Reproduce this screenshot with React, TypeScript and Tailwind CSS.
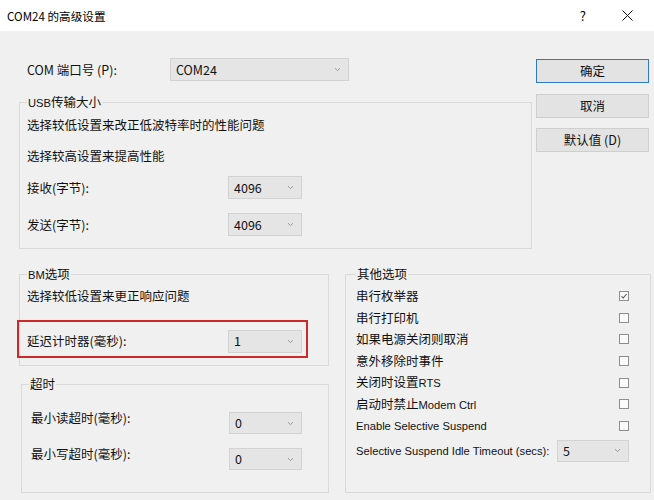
import React from 'react';

function Chevron() {
  return (
    <svg width="7" height="5" viewBox="0 0 7 5" className="shrink-0">
      <path d="M1 1.2 L3.5 3.6 L6 1.2" fill="none" stroke="#9a9a9a" strokeWidth="1" />
    </svg>
  );
}

// latin runs are set narrower, like Segoe UI next to the CJK face
function Lat({ children }: { children: React.ReactNode }) {
  return <span className="font-['Liberation_Sans',sans-serif] text-[11.2px]">{children}</span>;
}

function Combo({ value, width, height = 23 }: { value: string; width: number; height?: number }) {
  return (
    <div
      className="flex items-center justify-between bg-[#e5e5e5] border border-[#d2d2d2] pl-[5px] pr-[7px] shrink-0"
      style={{ width, height }}
    >
      <span className="leading-[16px]">{value}</span>
      <Chevron />
    </div>
  );
}

function CheckBox({ checked }: { checked?: boolean }) {
  return (
    <div className="w-[10px] h-[10px] border border-[#8e8e8e] bg-[#fbfbfb] flex items-center justify-center">
      {checked && (
        <svg width="8" height="8" viewBox="0 0 8 8">
          <path d="M1.5 4.3 L3.2 6 L6.6 2" fill="none" stroke="#555" strokeWidth="1.1" />
        </svg>
      )}
    </div>
  );
}

function Button({ label, primary }: { label: string; primary?: boolean }) {
  return (
    <div
      className={
        'h-[24px] w-[113px] flex items-center justify-center bg-[#e3e3e3] border leading-[16px] ' +
        (primary ? 'border-[#2f7ac4]' : 'border-[#cfcfcf]')
      }
    >
      {label}
    </div>
  );
}

const options: { key: string; label: React.ReactNode; checked?: boolean }[] = [
  { key: 'enum', label: '串行枚举器', checked: true },
  { key: 'printer', label: '串行打印机' },
  { key: 'power', label: '如果电源关闭则取消' },
  { key: 'surprise', label: '意外移除时事件' },
  { key: 'rts', label: <>关闭时设置<Lat>RTS</Lat></> },
  { key: 'modem', label: <>启动时禁止<Lat>Modem Ctrl</Lat></> },
  { key: 'suspend', label: <Lat>Enable Selective Suspend</Lat> },
];

export default function App() {
  return (
    <div className="w-[654px] h-[500px] bg-[#f0f0f0] overflow-hidden text-[12.5px] text-[#111] font-['Noto_Sans_CJK_SC','Noto_Sans',sans-serif]">
      {/* title bar */}
      <div className="h-[31px] bg-white flex items-center pl-[7px]">
        <span className="text-[11.6px] leading-[16px] text-black">COM24 的高级设置</span>
        <span className="ml-auto text-[13px] leading-[16px] text-black mr-[36px]">?</span>
        <svg width="11" height="11" viewBox="0 0 11 11" className="mr-[21px]">
          <path d="M0.5 0.5 L10.5 10.5 M10.5 0.5 L0.5 10.5" stroke="#111" strokeWidth="1" />
        </svg>
      </div>

      {/* top section */}
      <div className="flex pl-[19px]">
        <div className="w-[513px]">
          <div className="mt-[27px] h-[23px] flex items-center">
            <span className="pl-[8px] w-[151px] leading-[16px]">COM 端口号 (P):</span>
            <Combo value="COM24" width={179} />
          </div>

          <fieldset className="mt-[13px] border border-[#dadada] px-0">
            <legend className="ml-[7px] px-[1px] leading-[16px]"><Lat>USB</Lat>传输大小</legend>
            <div className="pl-[7px] pb-[12px]">
              <div className="mt-[4px] h-[20px] leading-[20px]">选择较低设置来改正低波特率时的性能问题</div>
              <div className="mt-[11px] h-[20px] leading-[20px]">选择较高设置来提高性能</div>
              <div className="mt-[10px] flex items-center">
                <span className="w-[201px] leading-[16px]">接收(字节):</span>
                <Combo value="4096" width={74} />
              </div>
              <div className="mt-[14px] flex items-center">
                <span className="w-[201px] leading-[16px]">发送(字节):</span>
                <Combo value="4096" width={74} />
              </div>
            </div>
          </fieldset>
        </div>

        <div className="ml-[4px] w-[113px] flex flex-col">
          <div className="mt-[28px]">
            <Button label="确定" primary />
          </div>
          <div className="mt-[11px]">
            <Button label="取消" />
          </div>
          <div className="mt-[10px]">
            <Button label="默认值 (D)" />
          </div>
        </div>
      </div>

      {/* bottom section */}
      <div className="flex pl-[19px] mt-[17px]">
        <div className="w-[310px]">
          <fieldset className="border border-[#dadada] px-0">
            <legend className="ml-[7px] px-[1px] leading-[16px]"><Lat>BM</Lat>选项</legend>
            <div className="pb-[7px]">
              <div className="pl-[7px] mt-[3px] h-[20px] leading-[20px]">选择较低设置来更正响应问题</div>
              <div className="-ml-[3px] mt-[14px] w-[291px] h-[38px] border-2 border-[#cc2a2a] flex items-center pt-[4px] pl-[8px]">
                <span className="w-[201px] leading-[16px]">延迟计时器(毫秒):</span>
                <Combo value="1" width={74} />
              </div>
            </div>
          </fieldset>

          <fieldset className="mt-[10px] ml-[2px] w-[308px] border border-[#dadada] px-0">
            <legend className="ml-[7px] px-[1px] leading-[16px]">超时</legend>
            <div className="pl-[9px] pb-[22px]">
              <div className="mt-[20px] flex items-start">
                <span className="w-[198px] -mt-[4px] leading-[20px]">最小读超时(毫秒):</span>
                <Combo value="0" width={73} height={22} />
              </div>
              <div className="mt-[14px] flex items-start">
                <span className="w-[198px] -mt-[4px] leading-[20px]">最小写超时(毫秒):</span>
                <Combo value="0" width={73} height={22} />
              </div>
            </div>
          </fieldset>
        </div>

        <fieldset className="ml-[16px] w-[304px] h-[227px] border border-[#dadada] px-0">
          <legend className="ml-[10px] px-[1px] leading-[16px]">其他选项</legend>
          <div className="pl-[10px] pr-[21px] mt-[3px]">
            {options.map((o) => (
              <div key={o.key} className="h-[21.7px] flex items-center justify-between">
                <span className="leading-[16px] whitespace-nowrap">{o.label}</span>
                <CheckBox checked={o.checked} />
              </div>
            ))}
            <div className="mt-[3px] flex items-center">
              <span className="w-[201px] leading-[16px] whitespace-nowrap">
                <Lat>Selective Suspend Idle Timeout (secs):</Lat>
              </span>
              <Combo value="5" width={72} height={22} />
            </div>
          </div>
        </fieldset>
      </div>
    </div>
  );
}
